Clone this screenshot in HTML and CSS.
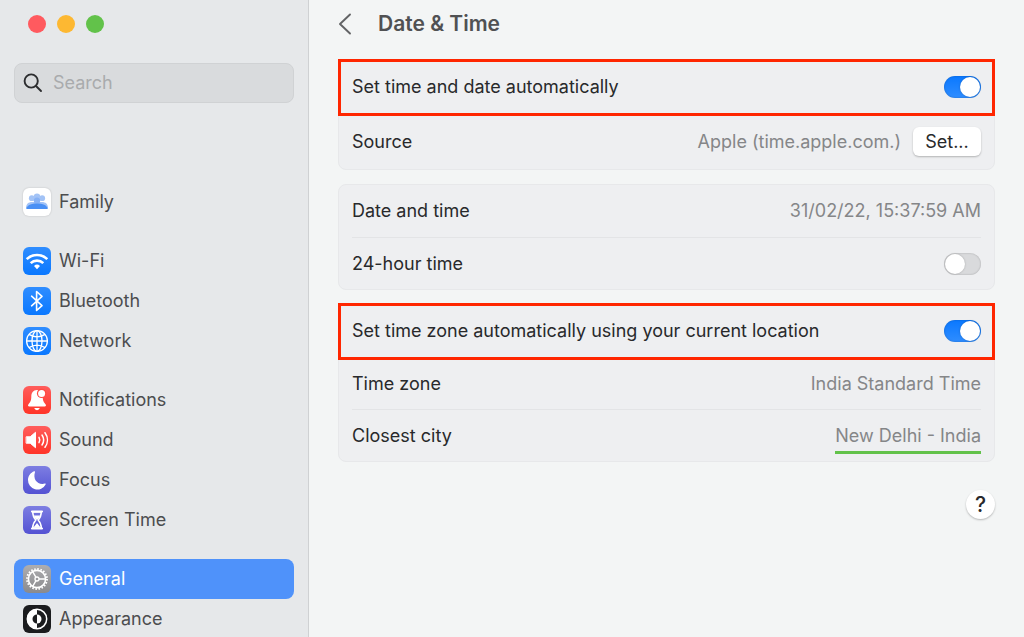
FILE: index.html
```html
<!DOCTYPE html>
<html lang="en">
<head>
    <meta charset="UTF-8">
    <meta name="viewport" content="width=device-width, initial-scale=1.0">
    <title>Date &amp; Time</title>
    <link rel="stylesheet" href="styles.css">
</head>
<body>
    <aside class="sidebar">
        <div class="window-buttons">
            <button class="dot close" aria-label="Close"></button>
            <button class="dot minimize" aria-label="Minimize"></button>
            <button class="dot maximize" aria-label="Zoom"></button>
        </div>
        <label class="search">
            <svg viewBox="0 0 20 20" width="20" height="20" fill="none" stroke="#2c2d2f" stroke-width="1.9" stroke-linecap="round">
                <circle cx="8.2" cy="8" r="6.6"/>
                <path d="M13 13l5 5"/>
            </svg>
            <input type="search" placeholder="Search" aria-label="Search">
        </label>
        <nav class="menu">
            <ul class="group">
                <li><a href="#">
                    <svg class="icon white" viewBox="0 0 28 28">
                        <g fill="#a3c3f6">
                            <circle cx="14" cy="8.6" r="3.2"/>
                            <circle cx="8.8" cy="10.2" r="2.9"/>
                            <circle cx="19.2" cy="10.2" r="2.9"/>
                            <path d="M3 20c0-4 2.500-6 6-6h10c3.500 0 6 2 6 6z"/>
                        </g>
                        <circle cx="14" cy="12.600" r="3.200" fill="#86b1f5"/>
                        <path d="M3.200 21c.8-3.700 5-5.400 10.800-5.400s10 1.700 10.800 5.400z" fill="#4a90f5"/>
                    </svg>
                    Family</a></li>
            </ul>
            <ul class="group">
                <li><a href="#">
                    <svg class="icon blue" viewBox="0 0 28 28" fill="none" stroke="#fff" stroke-width="2.600">
                        <path d="M3.700 12.200a14.600 14.600 0 0 1 20.600 0"/>
                        <path d="M7.700 16.200a8.900 8.900 0 0 1 12.600 0"/>
                        <path d="M14 22.200l-3-3.200a4.300 4.300 0 0 1 6 0z" fill="#fff" stroke="none"/>
                    </svg>
                    Wi-Fi</a></li>
                <li><a href="#">
                    <svg class="icon blue" viewBox="0 0 28 28" fill="none" stroke="#fff" stroke-width="1.600" stroke-linejoin="round" stroke-linecap="round">
                        <path d="M8.600 9.200l10.400 9.400-5.400 4.900V4.500L19 9.400 8.600 18.800"/>
                    </svg>
                    Bluetooth</a></li>
                <li><a href="#">
                    <svg class="icon blue" viewBox="0 0 28 28" fill="none" stroke="#fff" stroke-width="1.300">
                        <circle cx="14" cy="14" r="10.400"/>
                        <ellipse cx="14" cy="14" rx="5" ry="10.400"/>
                        <path d="M14 3.600v20.800M3.600 14h20.800M6 7.400c5 3.200 11 3.200 16 0M6 20.600c5-3.200 11-3.200 16 0"/>
                    </svg>
                    Network</a></li>
            </ul>
            <ul class="group">
                <li><a href="#">
                    <svg class="icon red" viewBox="0 0 28 28" fill="#fff">
                        <path d="M14 4c-4 0-5.700 3-5.700 6.600 0 4.400-1.300 6-2.800 7.600-.9 1-.5 2.200.8 2.200h15.400c1.300 0 1.700-1.200.8-2.200-1.500-1.600-2.800-3.200-2.800-7.600C19.700 7 18 4 14 4z"/>
                        <path d="M11.200 22h5.600a2.900 2.900 0 0 1-5.600 0z"/>
                        <circle cx="18.600" cy="7.400" r="4.700" fill="#ff4a42"/>
                        <circle cx="18.600" cy="7.400" r="3.500"/>
                    </svg>
                    Notifications</a></li>
                <li><a href="#">
                    <svg class="icon red" viewBox="0 0 28 28" fill="none" stroke="#fff" stroke-width="1.500" stroke-linecap="round">
                        <path d="M3.500 10.800h3.700l5.300-4.500v15.400l-5.300-4.500H3.500z" fill="#fff" stroke-width="1" stroke-linejoin="round"/>
                        <path d="M16 11.300c1 1.700 1 3.700 0 5.400M19 9c2 3 2 7 0 10M22 6.700c3.200 4.400 3.200 10.200 0 14.600"/>
                    </svg>
                    Sound</a></li>
                <li><a href="#">
                    <svg class="icon purple" viewBox="0 0 28 28" fill="#fff">
                        <path d="M11.200 5.300c.6-.3 1 .1.800.7-2.400 7.400 2.600 13.300 9.900 11.600.7-.1 1 .3.700.8A9.300 9.300 0 0 1 5 14c0-3.900 2.500-7.300 6.200-8.700z"/>
                    </svg>
                    Focus</a></li>
                <li><a href="#">
                    <svg class="icon purple" viewBox="0 0 28 28">
                        <path d="M9 5.500h10M9 22.500h10" stroke="#fff" stroke-width="2.200" stroke-linecap="round"/>
                        <path d="M9.700 6c0 4 .8 5.400 3.100 8-2.300 2.600-3.100 4-3.100 8h8.600c0-4-.8-5.400-3.100-8 2.300-2.600 3.100-4 3.100-8z" fill="none" stroke="#fff" stroke-width="1.500"/>
                        <path d="M10.700 9.600h6.600c-.5 1.500-1.500 2.800-3.300 4.400-1.800-1.600-2.800-2.900-3.300-4.400zM10.400 21.500l3.600-4.400 3.600 4.400z" fill="#fff"/>
                    </svg>
                    Screen Time</a></li>
            </ul>
            <ul class="group">
                <li><a href="#" class="active" aria-current="page">
                    <svg class="icon gray" viewBox="0 0 28 28" fill="none" stroke="#fff">
                        <circle cx="14" cy="14" r="10" stroke-width="1.900" stroke-dasharray="1.570 1.570"/>
                        <circle cx="14" cy="14" r="8.600" stroke-width="1.600"/>
                        <circle cx="14" cy="14" r="2" stroke-width="1.300"/>
                        <path d="M16 14h6.600M13 12.300L9.700 6.600M13 15.700l-3.300 5.700" stroke-width="1.400"/>
                    </svg>
                    General</a></li>
                <li><a href="#">
                    <svg class="icon black" viewBox="0 0 28 28">
                        <circle cx="14" cy="14" r="9.700" fill="none" stroke="#fff" stroke-width="1.500"/>
                        <path d="M14 4a10 10 0 0 0 0 20v-5.500a4.500 4.500 0 0 1 0-9z" fill="#fff"/>
                        <path d="M14 9.500a4.500 4.500 0 0 1 0 9z" fill="#fff"/>
                    </svg>
                    Appearance</a></li>
            </ul>
        </nav>
    </aside>

    <main class="content">
        <header class="title-bar">
            <button class="back" aria-label="Back">
                <svg viewBox="0 0 14 22" width="14" height="22" fill="none" stroke="#626365" stroke-width="1.900" stroke-linecap="round" stroke-linejoin="round">
                    <path d="M12 1.500L2 11l10 9.500"/>
                </svg>
            </button>
            <h1>Date &amp; Time</h1>
        </header>

        <section class="card">
            <div class="row highlight">
                <label for="auto-date">Set time and date automatically</label>
                <input type="checkbox" class="switch" id="auto-date" checked>
            </div>
            <div class="row">
                <span>Source</span>
                <div class="source">
                    <span class="value">Apple (time.apple.com.)</span>
                    <button class="set">Set...</button>
                </div>
            </div>
        </section>

        <section class="card">
            <div class="row">
                <span>Date and time</span>
                <span class="value">31/02/22, 15:37:59 AM</span>
            </div>
            <div class="row">
                <label for="hours">24-hour time</label>
                <input type="checkbox" class="switch" id="hours">
            </div>
        </section>

        <section class="card">
            <div class="row highlight">
                <label for="auto-zone">Set time zone automatically using your current location</label>
                <input type="checkbox" class="switch" id="auto-zone" checked>
            </div>
            <div class="row">
                <span>Time zone</span>
                <span class="value">India Standard Time</span>
            </div>
            <div class="row">
                <span>Closest city</span>
                <span class="value underlined">New Delhi - India</span>
            </div>
        </section>

        <button class="help" aria-label="Help">?</button>
    </main>
</body>
</html>
```

FILE: styles.css
```css
* {
    box-sizing: border-box;
}
body {
    display: flex;
    height: 100vh;
    margin: 0;
    overflow: hidden;
    font-family: Inter, "Liberation Sans", sans-serif;
    font-size: 18px;
    line-height: 22px;
    color: #28292b;
    background-color: #f3f5f5;
}
button {
    padding: 0;
    border: none;
    font-family: inherit;
    cursor: pointer;
}

/* sidebar */
.sidebar {
    flex: none;
    width: 309px;
    padding: 15px 14px 0;
    background-color: #e6e8ea;
    border-right: 1px solid #cfd1d3;
}
.window-buttons {
    display: flex;
    gap: 11px;
    padding-left: 14px;
}
.dot {
    width: 18px;
    height: 18px;
    border-radius: 50%;
}
.close {
    background-color: #ff5a5f;
}
.minimize {
    background-color: #fdb832;
}
.maximize {
    background-color: #62c24a;
}
.search {
    display: flex;
    align-items: center;
    gap: 10px;
    height: 40px;
    margin-top: 30px;
    padding: 0 8px;
    border: 1px solid #d0d2d4;
    border-radius: 8px;
    background-color: #d9dbdd;
}
.search input {
    flex: 1;
    min-width: 0;
    padding: 0;
    border: none;
    outline: none;
    background: none;
    font: inherit;
}
.search input::placeholder {
    color: #a9abad;
}
.menu {
    display: flex;
    flex-direction: column;
    gap: 19px;
    margin-top: 79px;
}
.group {
    margin: 0;
    padding: 0;
    list-style: none;
}
.group a {
    display: flex;
    align-items: center;
    gap: 8px;
    height: 40px;
    padding: 0 9px;
    border-radius: 8px;
    color: #4c4d4f;
    text-decoration: none;
}
.group .active {
    background-color: #4f92fa;
    color: white;
}
.icon {
    width: 28px;
    height: 28px;
    border-radius: 6px;
}
.white {
    background-color: white;
    box-shadow: 0 0 2px rgba(0, 0, 0, 0.2);
}
.blue {
    background: linear-gradient(#2f8dff, #0a78ff);
}
.red {
    background: linear-gradient(#ff5d5c, #ff3428);
}
.purple {
    background: linear-gradient(#7d7ee2, #5452d3);
}
.gray {
    background: linear-gradient(#adadb0, #8a8a8d);
}
.black {
    background-color: #1b1c1e;
}

/* settings */
.content {
    display: flex;
    flex: 1;
    flex-direction: column;
    gap: 14px;
    min-width: 0;
    padding: 0 29px;
}
.title-bar {
    display: flex;
    align-items: center;
    gap: 26px;
    height: 46px;
    padding-top: 2px;
}
.back {
    display: flex;
    background: none;
}
h1 {
    margin: 0;
    font-size: 21px;
    font-weight: 600;
    color: #505153;
}
.card {
    padding: 0 13px;
    border: 1px solid #e7e8ea;
    border-radius: 8px;
    background-color: #eeeff1;
}
.row {
    display: flex;
    align-items: center;
    justify-content: space-between;
    min-height: 52px;
}
.row + .row {
    border-top: 1px solid #e3e4e6;
}
.highlight {
    position: relative;
    z-index: 1;
}
/* red frame drawn over the edges of the card */
.highlight::after {
    content: "";
    position: absolute;
    inset: -2px -14px -3px;
    border: 3px solid #ff2600;
    pointer-events: none;
}
.value {
    color: #858688;
}
.source {
    display: flex;
    align-items: center;
    gap: 12px;
    padding: 13px 0;
}
.set {
    width: 68px;
    height: 29px;
    border-radius: 6px;
    background-color: white;
    box-shadow: 0 1px 2px rgba(0, 0, 0, 0.25);
    font-size: 18px;
    color: #28292b;
}
.switch {
    appearance: none;
    display: flex;
    width: 37px;
    height: 22px;
    margin: 0;
    padding: 1px;
    border-radius: 11px;
    background-color: #d9dadc;
    box-shadow: inset 0 0 2px rgba(0, 0, 0, 0.25);
    cursor: pointer;
}
.switch::before {
    content: "";
    width: 20px;
    height: 20px;
    border-radius: 50%;
    background-color: white;
    box-shadow: 0 0 2px rgba(0, 0, 0, 0.25);
}
.switch:checked {
    justify-content: flex-end;
    background: linear-gradient(#0a78ff, #2f8dff);
}
.underlined {
    padding: 7px 0 4px;
    border-bottom: 3px solid #62c24a;
}
.help {
    align-self: flex-end;
    width: 29px;
    height: 29px;
    margin-top: 14px;
    border-radius: 50%;
    background-color: white;
    box-shadow: 0 1px 2px rgba(0, 0, 0, 0.25);
    font-size: 21px;
    font-weight: 500;
    color: #28292b;
}
```
